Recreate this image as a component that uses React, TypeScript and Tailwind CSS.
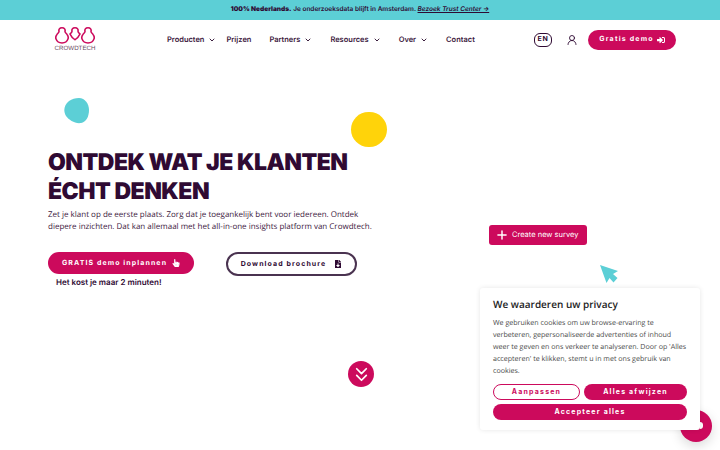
import { ChevronDown, ChevronsDown, Plus, UserRound } from "lucide-react";
import { FaFileDownload, FaHandPointer, FaSignInAlt } from "react-icons/fa";

const navItems = [
    { label: "Producten", chevron: true, className: "ml-0" },
    { label: "Prijzen", chevron: false, className: "ml-[10px]" },
    { label: "Partners", chevron: true, className: "ml-[18px]" },
    { label: "Resources", chevron: true, className: "ml-[18px]" },
    { label: "Over", chevron: true, className: "ml-[18px]" },
    { label: "Contact", chevron: false, className: "ml-[18px]" },
];

function Logo() {
    return (
        <div className="flex w-[40px] flex-col items-center">
            <svg width="40" height="17" viewBox="0 0 40 19" preserveAspectRatio="none" fill="none" stroke="#cc0a5c" strokeWidth="1.6">
                <path d="M7 .8c-2.500 0-3.500 2-3 3.800.3 1.200-1 2.200-2 3.700-1.200 1.700-1.500 3.500-1 5 .8 2.600 3.300 4.500 6 4.500s5.200-1.900 6-4.500c.5-1.500.2-3.300-1-5-1-1.500-2.300-2.500-2-3.700.5-1.800-.5-3.800-3-3.800z" />
                <path d="M20 .8c-2.500 0-3.500 2-3 3.800.3 1.200-1 2-2 3.200 1 2.500 3 5 5 6.500 2-1.500 4-4 5-6.500-1-1.200-2.300-2-2-3.200.5-1.800-.5-3.800-3-3.800z" />
                <path d="M33 .8c-2.500 0-3.500 2-3 3.800.3 1.200-1 2.200-2 3.700-1.200 1.700-1.500 3.500-1 5 .8 2.600 3.300 4.500 6 4.500s5.200-1.900 6-4.500c.5-1.500.2-3.300-1-5-1-1.500-2.300-2.500-2-3.700.5-1.800-.5-3.800-3-3.800z" />
            </svg>
            <span className="mt-[1px] font-['Liberation_Sans',sans-serif] text-[6.200px] leading-[7px] text-[#6b4a63]">CROWDTECH</span>
        </div>
    );
}

export default function App() {
    return (
        <div className="relative h-[450px] w-[720px] overflow-hidden bg-white font-['Inter',sans-serif] text-[#2f0a33] antialiased [text-rendering:geometricPrecision]">
            <div className="flex h-[20px] items-center justify-center bg-[#5ccfd6] text-[6.500px] font-semibold">
                <p>
                    <b className="font-black">100% Nederlands.</b> Je onderzoeksdata blijft in Amsterdam.{" "}
                    <a href="#" className="font-semibold italic underline">Bezoek Trust Center →</a>
                </p>
            </div>

            <header className="flex h-[39px] items-center pl-[55px] pr-[44px]">
                <Logo />
                <nav className="ml-[72px] flex items-center text-[7.500px] font-semibold text-[#3d2040]">
                    {navItems.map((item) => (
                        <a key={item.label} href="#" className={`flex items-center ${item.className}`}>
                            {item.label}
                            {item.chevron && <ChevronDown size={8} strokeWidth={3} className="ml-[4px]" />}
                        </a>
                    ))}
                </nav>
                <span className="ml-auto flex h-[14px] w-[18px] items-center justify-center rounded-[6px] border border-[#2f0a33] text-[7px] font-bold tracking-[0.8px]">EN</span>
                <UserRound size={12} strokeWidth={1.8} className="ml-[14px]" />
                <a href="#" className="ml-[10px] flex h-[20px] w-[88px] items-center justify-center gap-[3px] rounded-full bg-[#cc0a5c] text-[7px] font-bold tracking-[1.2px] text-white">
                    Gratis demo <FaSignInAlt size={8} />
                </a>
            </header>

            <main className="relative flex">
                <section className="w-[440px] pl-[48px] pt-[89px]">
                    <h1 className="text-[23px] leading-[29px] font-black tracking-[-0.5px] text-[#2f0a33]">
                        ONTDEK WAT JE KLANTEN<br />ÉCHT DENKEN
                    </h1>
                    <p className="mt-[3px] w-[325px] font-['Open_Sans',sans-serif] text-[8px] leading-[12px] text-[#3d2040]">
                        Zet je klant op de eerste plaats. Zorg dat je toegankelijk bent voor iedereen. Ontdek diepere inzichten. Dat kan allemaal met het all-in-one insights platform van Crowdtech.
                    </p>
                    <div className="mt-[19px] flex items-start">
                        <div>
                            <a href="#" className="flex h-[22px] w-[146px] items-center justify-center gap-[5px] rounded-full bg-[#cc0a5c] text-[7px] font-bold tracking-[1.1px] text-white">
                                GRATIS demo inplannen <FaHandPointer size={8} />
                            </a>
                            <p className="mt-[2px] pl-[8px] text-[8px] font-semibold">Het kost je maar 2 minuten!</p>
                        </div>
                        <a href="#" className="ml-[32px] flex h-[24px] w-[131px] items-center justify-center gap-[8px] rounded-full border-2 border-[#4a3350] text-[7px] font-bold tracking-[1.1px]">
                            Download brochure <FaFileDownload size={8} />
                        </a>
                    </div>
                </section>

                <section className="pl-[49px] pt-[166px]">
                    <div className="flex h-[20px] w-[98px] items-center gap-[3px] rounded-[3px] bg-[#cc0a5c] pl-[6px] text-[7.500px] font-normal text-white">
                        <Plus size={14} strokeWidth={2.500} /> Create new survey
                    </div>
                    <svg width="20" height="19" viewBox="0 0 20 19" className="ml-[111px] mt-[20px]">
                        <path d="M0 0l18 6-5 3 4.500 4-4 4.500-4-4.500-3 5z" fill="#5ccfd6" />
                    </svg>
                </section>
            </main>

            {/* decorative blobs */}
            <svg width="25" height="26" viewBox="0 0 25 26" className="absolute left-[64px] top-[98px]">
                <path d="M15 0C21 0 25 6 25 12C25 19 22 24 17 25C11 26 5 22 2 18C-1 13 0 7 5 3C8 1 11 0 15 0Z" fill="#5ccfd6" />
            </svg>
            <div className="absolute left-[351px] top-[112px] h-[35px] w-[36px] rounded-full bg-[#ffd30a]" />

            <a href="#" className="absolute left-[348px] top-[361px] flex h-[26px] w-[26px] items-center justify-center rounded-full bg-[#cc0a5c] text-white">
                <ChevronsDown size={23} strokeWidth={1.800} />
            </a>

            <div className="absolute left-[680px] top-[410px] h-[32px] w-[32px] rounded-full bg-[#cc0a5c] shadow-[0_4px_12px_rgba(0,0,0,0.15)]" />
            <div className="absolute left-[700px] top-[422px] h-[7px] w-[3px] rounded-r-full bg-white" />

            <div className="absolute left-[480px] top-[288px] h-[142px] w-[220px] rounded-[3px] bg-white px-[13px] pt-[9px] font-['Open_Sans',sans-serif] shadow-[0_0_5px_rgba(0,0,0,0.1)]">
                <h2 className="text-[10px] leading-[14px] font-semibold text-[#222222]">We waarderen uw privacy</h2>
                <p className="mt-[6px] whitespace-nowrap text-[7.100px] leading-[12px] text-[#4a4a4a]">
                    We gebruiken cookies om uw browse-ervaring te<br />
                    verbeteren, gepersonaliseerde advertenties of inhoud<br />
                    weer te geven en ons verkeer te analyseren. Door op 'Alles<br />
                    accepteren' te klikken, stemt u in met ons gebruik van<br />
                    cookies.
                </p>
                <div className="mt-[7px] flex flex-col gap-[4px] font-['Inter',sans-serif] text-[7px] font-bold tracking-[1.2px]">
                    <div className="flex gap-[4px]">
                        <button className="h-[16px] w-[87px] rounded-full border border-[#cc0a5c] text-[#cc0a5c]">Aanpassen</button>
                        <button className="h-[16px] w-[103px] rounded-full bg-[#cc0a5c] text-white">Alles afwijzen</button>
                    </div>
                    <button className="h-[16px] w-[194px] rounded-full bg-[#cc0a5c] text-white">Accepteer alles</button>
                </div>
            </div>
        </div>
    );
}
